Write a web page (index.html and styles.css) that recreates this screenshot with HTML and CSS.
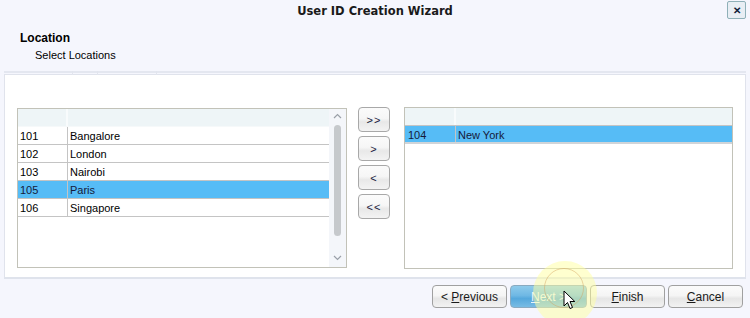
FILE: index.html
```html
<!DOCTYPE html>
<html lang="en">
<head>
    <meta charset="UTF-8">
    <title>User ID Creation Wizard</title>
    <link rel="stylesheet" href="styles.css">
</head>
<body>
    <div class="wizard">
        <div class="titlebar">
            <span class="title">User ID Creation Wizard</span>
            <span class="close">&#x2715;</span>
        </div>
        <div class="step-head">
            <div class="step-name">Location</div>
            <div class="step-desc">Select Locations</div>
        </div>
        <div class="tabline">
            <span class="tab t1"></span><span class="tab t2"></span><span class="tab t3"></span>
        </div>
        <div class="panel">
            <div class="grid grid-left">
                <div class="rows">
                    <div class="row head"><span class="c1"></span><span class="c2"></span></div>
                    <div class="row"><span class="c1">101</span><span class="c2">Bangalore</span></div>
                    <div class="row"><span class="c1">102</span><span class="c2">London</span></div>
                    <div class="row"><span class="c1">103</span><span class="c2">Nairobi</span></div>
                    <div class="row selected"><span class="c1">105</span><span class="c2">Paris</span></div>
                    <div class="row"><span class="c1">106</span><span class="c2">Singapore</span></div>
                </div>
                <div class="scrollbar">
                    <svg class="arrow" width="9" height="6" viewBox="0 0 9 6"><path d="M1 5 L4.5 1.5 L8 5" fill="none" stroke="#9aa0a8" stroke-width="1.2"/></svg>
                    <div class="thumb"></div>
                    <svg class="arrow" width="9" height="6" viewBox="0 0 9 6"><path d="M1 1 L4.5 4.5 L8 1" fill="none" stroke="#9aa0a8" stroke-width="1.2"/></svg>
                </div>
            </div>
            <div class="movers">
                <button class="mover">&gt;&gt;</button>
                <button class="mover">&gt;</button>
                <button class="mover">&lt;</button>
                <button class="mover">&lt;&lt;</button>
            </div>
            <div class="grid grid-right">
                <div class="rows">
                    <div class="row head"><span class="c1"></span><span class="c2"></span></div>
                    <div class="row selected"><span class="c1">104</span><span class="c2">New York</span></div>
                </div>
            </div>
        </div>
        <div class="actions">
            <button class="btn">&lt; <u>P</u>revious</button>
            <button class="btn primary"><u>N</u>ext &gt;</button>
            <button class="btn"><u>F</u>inish</button>
            <button class="btn"><u>C</u>ancel</button>
        </div>

        <!-- cursor highlight over the Next button -->
        <div class="halo"></div>
        <div class="ring"></div>
        <svg class="cursor" width="13" height="20" viewBox="0 0 13 20">
            <path d="M1 1 L1 16 L4.5 12.5 L7 18.5 L9.5 17.5 L7 11.5 L11.8 11.5 Z" fill="#fff" stroke="#000" stroke-width="1" stroke-linejoin="miter"/>
        </svg>
    </div>
</body>
</html>
```

FILE: styles.css
```css
body {
    margin: 0;
    padding: 0;
    background-color: #f5f6fd;
    font-family: "Liberation Sans", Arial, sans-serif;
    font-size: 11px;
    color: #000;
}
.wizard {
    position: relative;
    width: 750px;
    height: 318px;
    overflow: hidden;
}
.titlebar {
    height: 20px;
    display: flex;
    align-items: center;
    justify-content: center;
    position: relative;
}
.title {
    font-family: "DejaVu Sans", Verdana, sans-serif;
    font-weight: bold;
    font-size: 11.5px;
    color: #1a1a1a;
    margin-top: 1px;
}
.close {
    position: absolute;
    right: 4px;
    top: 1px;
    width: 17px;
    height: 16px;
    border: 1px solid #8fb0b8;
    border-radius: 2px;
    background: #e8eef4;
    color: #10203a;
    font-size: 10px;
    font-weight: bold;
    display: flex;
    align-items: center;
    justify-content: center;
}
.step-head {
    padding: 11px 0 0 20px;
    height: 40px;
}
.step-name {
    font-weight: bold;
    font-size: 12px;
    line-height: 15px;
}
.step-desc {
    padding-left: 15px;
    line-height: 15px;
    margin-top: 2px;
}
.tabline {
    height: 2px;
    margin: 0 4px 0 4px;
    background: #e4e7f0;
    display: flex;
    position: relative;
}
.tab {
    height: 4px;
    border-right: 1px solid #e2e5ee;
}
.t1 { width: 68px; }
.t2 { width: 24px; }
.t3 { width: 58px; }
.panel {
    margin: 1px 4px 0 4px;
    height: 205px;
    background: #fff;
    border: 1px solid #e0e3ec;
    border-bottom: 2px solid #dfe3ec;
    display: flex;
    align-items: flex-start;
    padding: 32px 0 0 12px;
    box-sizing: border-box;
}
.grid {
    border: 1px solid #c2c2b8;
    background: #fff;
    height: 160px;
    box-sizing: border-box;
    display: flex;
}
.grid-left {
    width: 330px;
    margin-top: 1px;
}
.grid-right {
    width: 329px;
    height: 162px;
}
.rows {
    flex: 1;
}
.row {
    display: flex;
    height: 18px;
    border-bottom: 1px solid #c4c4c4;
    box-sizing: border-box;
    line-height: 17px;
    padding-top: 1px;
}
.row .c1 {
    width: 50px;
    padding-left: 2px;
    border-right: 1px solid #c4c4c4;
    box-sizing: border-box;
    margin-top: -1px;
    padding-top: 1px;
}
.row .c2 {
    flex: 1;
    padding-left: 2px;
}
.row.head {
    background: #eef5f7;
    border-bottom: 1px solid #f6f9fa;
}
.row.head .c1 {
    border-right: 2px solid #f8fbfc;
}
.grid-right .row.head {
    border-bottom: 1px solid #c4c4c4;
}
.grid-right .row .c1 {
    width: 51px;
    padding-left: 3px;
}
.row.selected {
    background: #56bcf6;
    color: #151a3a;
}
.grid-right .row.selected {
    border-bottom: 2px solid #d0d4d8;
}
.scrollbar {
    width: 17px;
    background: #f4f6fa;
    display: flex;
    flex-direction: column;
    align-items: center;
    padding: 4px 0 6px 0;
    box-sizing: border-box;
}
.thumb {
    width: 7px;
    height: 111px;
    margin: 6px 0 0 0;
    background: #c6c9cc;
    border-radius: 4px;
    flex: none;
}
.scrollbar .arrow:last-child {
    margin-top: auto;
}
.movers {
    display: flex;
    flex-direction: column;
    gap: 4px;
    margin: 0 14px 0 11px;
}
.mover {
    width: 32px;
    height: 25px;
    border: 1px solid #a8a8a8;
    border-radius: 4px;
    background: linear-gradient(#fbfbfb 0%, #f6f6f6 45%, #e8e8e8 60%, #f3f3f3 100%);
    font-family: "Liberation Sans", Arial, sans-serif;
    font-size: 11px;
    color: #1a1a40;
    padding: 0;
    letter-spacing: 1px;
}
.actions {
    display: flex;
    gap: 3px;
    padding: 6px 0 0 432px;
}
.btn {
    width: 75px;
    height: 23px;
    border: 1px solid #a0a0a0;
    border-radius: 4px;
    background: linear-gradient(#fbfbfb 0%, #f5f5f5 45%, #e6e6e6 60%, #f2f2f2 100%);
    font-family: "Liberation Sans", Arial, sans-serif;
    font-size: 12px;
    color: #1a1a1a;
    padding: 0;
}
.btn.primary {
    width: 77px;
    background: linear-gradient(#8fcbeb 0%, #6fb8e4 45%, #55a8dc 60%, #78bce4 100%);
    border-color: #8aaac0;
    color: #e8f4fc;
}
.halo {
    position: absolute;
    left: 533px;
    top: 261px;
    width: 64px;
    height: 64px;
    border-radius: 50%;
    background: rgba(255, 255, 160, 0.5);
    pointer-events: none;
}
.ring {
    position: absolute;
    left: 544px;
    top: 268px;
    width: 40px;
    height: 40px;
    border-radius: 50%;
    border: 1px solid rgba(210, 160, 90, 0.45);
    box-sizing: border-box;
    pointer-events: none;
}
.cursor {
    position: absolute;
    left: 563px;
    top: 290px;
}
```
